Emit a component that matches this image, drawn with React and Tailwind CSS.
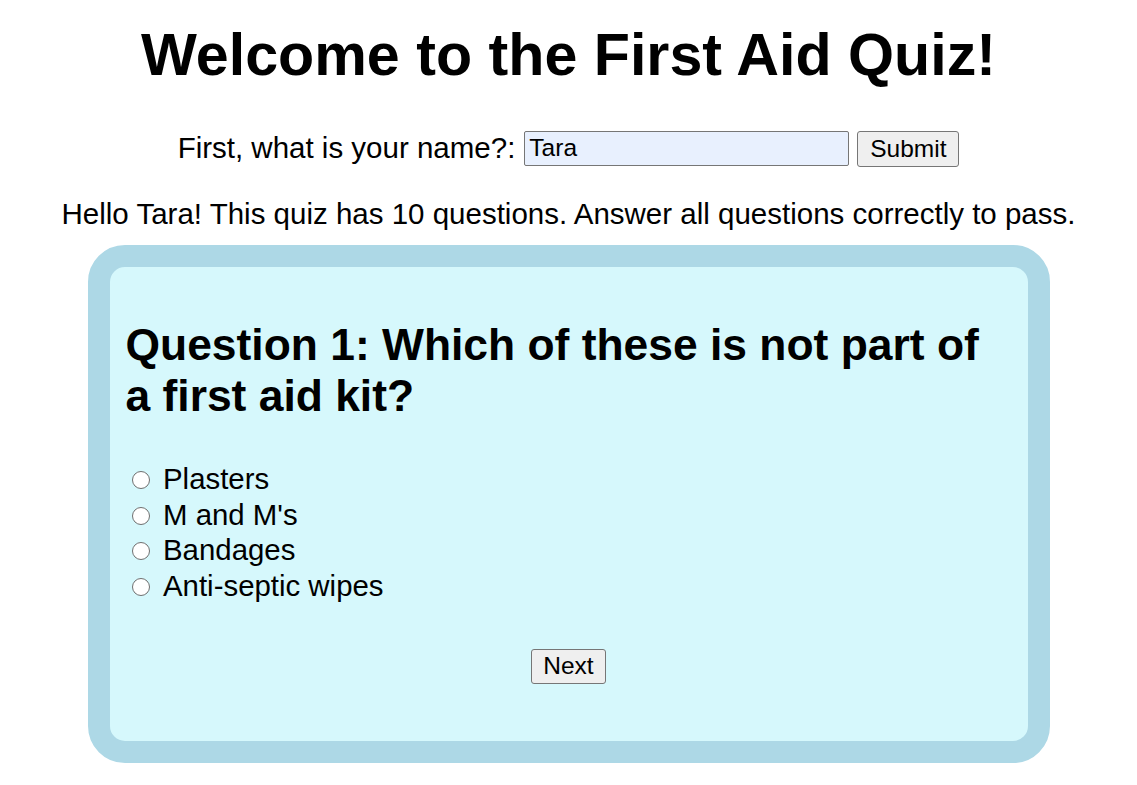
const options = ['Plasters', "M and M's", 'Bandages', 'Anti-septic wipes'];

function RadioOption({ label }) {
  return (
    <label className="flex items-center h-[35.7px] cursor-pointer">
      <span className="mt-[2px] ml-[6.5px] w-[18px] h-[18px] rounded-full border border-[#6f6f6f] bg-white flex-shrink-0" />
      <span className="ml-[13px] text-[29.4px] leading-[35.7px]">{label}</span>
    </label>
  );
}

export default function App() {
  return (
    <div className="min-h-[785px] bg-white text-black font-['Liberation_Sans',Arial,sans-serif] pt-[21px]">
      <h1 className="text-center text-[59.2px] font-bold leading-[67.5px]">
        Welcome to the First Aid Quiz!
      </h1>

      {/* Name form */}
      <div className="mt-[42.5px] flex justify-center items-start">
        <span className="text-[29.5px] leading-[34px] whitespace-nowrap">First, what is your name?:</span>
        <input
          type="text"
          defaultValue="Tara"
          className="ml-[9px] w-[325px] h-[35px] px-[4px] border border-[#767676] rounded-[2px] bg-[#e8f0fe] text-[24.5px] outline-none"
        />
        <button className="ml-[8px] w-[102px] h-[36px] border border-[#767676] rounded-[3px] bg-[#efefef] text-[24.5px] leading-none">
          Submit
        </button>
      </div>

      <p className="mt-[29.5px] text-center text-[29.5px] leading-[33.7px]">
        Hello Tara! This quiz has 10 questions. Answer all questions correctly to pass.
      </p>

      {/* Question card */}
      <div className="mt-[14.8px] mx-auto w-[962px] h-[518px] border-[22px] border-[#add8e6] rounded-[37px] bg-[#d6f8fc] px-[16px] pt-[51.5px]">
        <h2 className="text-[44.4px] font-bold leading-[51px] pr-[16px]">
          Question 1: Which of these is not part of a first aid kit?
        </h2>

        <div className="mt-[40.5px] flex flex-col">
          {options.map((opt) => (
            <RadioOption key={opt} label={opt} />
          ))}
        </div>

        <div className="mt-[45px] flex justify-center">
          <button className="w-[75px] h-[35px] border border-[#767676] rounded-[3px] bg-[#efefef] text-[24.5px] leading-none">
            Next
          </button>
        </div>
      </div>
    </div>
  );
}
